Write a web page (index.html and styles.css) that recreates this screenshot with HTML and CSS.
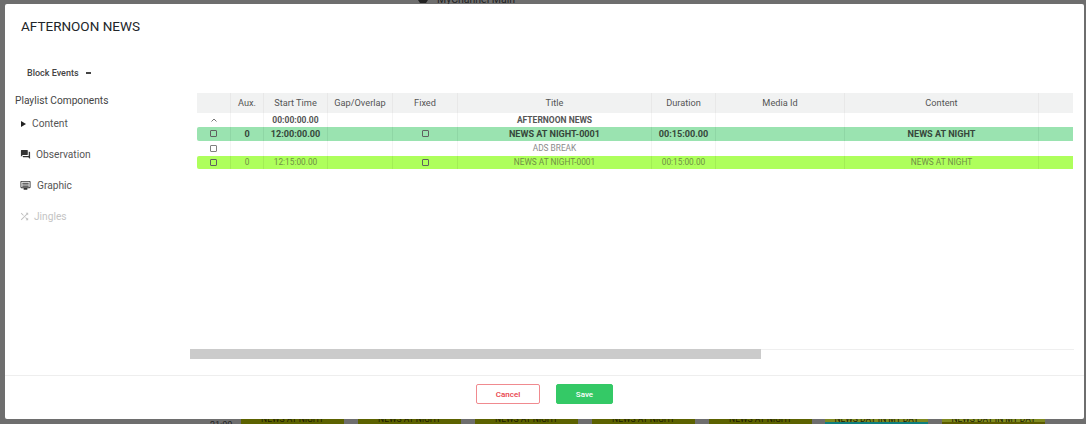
FILE: index.html
```html
<!DOCTYPE html>
<html lang="en">
<head>
<meta charset="utf-8">
<title>Afternoon News</title>
<link rel="stylesheet" href="styles.css">
</head>
<body>
<div class="backdrop">
  <div class="bg-top"><svg class="bg-logo" width="10" height="4" viewBox="0 0 10 4"><path d="M0 0h10L8 3H2z" fill="#222"/></svg><span class="bg-channel">MyChannel Main</span></div>
  <div class="bg-bottom">
    <span class="bg-time">21:00</span>
    <span class="bg-bar">NEWS AT NIGHT</span>
    <span class="bg-bar">NEWS AT NIGHT</span>
    <span class="bg-bar">NEWS AT NIGHT</span>
    <span class="bg-bar">NEWS AT NIGHT</span>
    <span class="bg-bar">NEWS AT NIGHT</span>
    <span class="bg-bar bg-teal">NEWS DAY IN MY DAY</span>
    <span class="bg-bar bg-dark">NEWS DAY IN MY DAY</span>
  </div>
</div>
<div class="modal">
  <h1 class="modal-title">AFTERNOON NEWS</h1>
  <div class="modal-body">
    <aside class="side">
      <div class="block-events">Block Events<span class="dash"></span></div>
      <div class="side-title">Playlist Components</div>
      <ul class="side-list">
        <li class="side-item item-content"><svg class="ic-play" width="5" height="6" viewBox="0 0 5 6"><path d="M0 0l5 3-5 3z"/></svg>Content</li>
        <li class="side-item item-obs"><svg class="ic" width="11" height="11" viewBox="0 0 24 24"><path d="M21 6h-2v9H6v2c0 .55.45 1 1 1h11l4 4V7c0-.55-.45-1-1-1zm-4 6V3c0-.55-.45-1-1-1H3c-.55 0-1 .45-1 1v14l4-4h10c.55 0 1-.45 1-1z"/></svg>Observation</li>
        <li class="side-item item-gfx"><svg class="ic" width="11" height="11" viewBox="0 0 24 24"><path d="M21 2H3c-1.100 0-2 .9-2 2v12c0 1.100.9 2 2 2h5v3h8v-3h5c1.100 0 2-.9 2-2V4c0-1.100-.9-2-2-2zm0 14H3V4h18zM5 6h14v2H5zm0 4h14v2H5zm0 3h14v1.500H5z"/></svg>Graphic</li>
        <li class="side-item item-jin"><svg class="ic" width="11" height="11" viewBox="0 0 24 24"><path d="M10.590 9.170 5.410 4 4 5.410l5.170 5.170zM14.500 4l2.040 2.040L4 18.590 5.410 20 17.960 7.460 20 9.500V4zm.33 9.410-1.410 1.410 3.130 3.130L14.500 20H20v-5.500l-2.040 2.040z"/></svg>Jingles</li>
      </ul>
    </aside>
    <section class="grid-wrap">
      <table class="grid">
        <colgroup>
          <col class="c-chk"><col class="c-aux"><col class="c-start"><col class="c-gap"><col class="c-fixed"><col class="c-title"><col class="c-dur"><col class="c-media"><col class="c-content"><col class="c-end">
        </colgroup>
        <thead>
          <tr><th></th><th>Aux.</th><th>Start Time</th><th>Gap/Overlap</th><th>Fixed</th><th>Title</th><th>Duration</th><th>Media Id</th><th>Content</th><th></th></tr>
        </thead>
        <tbody>
          <tr class="r-head"><td><svg class="caret" width="6" height="4" viewBox="0 0 6 4"><path d="M.5 3.500 3 1l2.500 2.500" fill="none" stroke="#777"/></svg></td><td></td><td>00:00:00.00</td><td></td><td></td><td>AFTERNOON NEWS</td><td></td><td></td><td></td><td></td></tr>
          <tr class="r-green"><td><span class="chk"></span></td><td>0</td><td>12:00:00.00</td><td></td><td><span class="chk"></span></td><td>NEWS AT NIGHT-0001</td><td>00:15:00.00</td><td></td><td>NEWS AT NIGHT</td><td></td></tr>
          <tr class="r-plain"><td><span class="chk"></span></td><td></td><td></td><td></td><td></td><td>ADS BREAK</td><td></td><td></td><td></td><td></td></tr>
          <tr class="r-lime"><td><span class="chk"></span></td><td>0</td><td>12:15:00.00</td><td></td><td><span class="chk"></span></td><td>NEWS AT NIGHT-0001</td><td>00:15:00.00</td><td></td><td>NEWS AT NIGHT</td><td></td></tr>
        </tbody>
      </table>
      <div class="hscroll"><div class="hthumb"></div></div>
    </section>
  </div>
  <footer class="modal-foot">
    <button class="btn btn-cancel">Cancel</button>
    <button class="btn btn-save">Save</button>
  </footer>
</div>
</body>
</html>
```
FILE: styles.css
```css
* { box-sizing: border-box; }
html, body { margin: 0; height: 100%; }
body {
  position: relative;
  width: 1086px;
  height: 424px;
  overflow: hidden;
  background: #6e6e6e;
  font-family: Roboto, "Liberation Sans", sans-serif;
  color: #333;
}
.backdrop { height: 424px; display: flex; flex-direction: column; justify-content: space-between; }
.bg-top { height: 4px; overflow: hidden; padding-left: 418px; display: flex; gap: 9px; font-size: 10.500px; line-height: 4px; color: #222; }
.bg-channel { transform: translateY(-2px); }
.bg-logo { flex: none; }
.bg-bottom { height: 5px; overflow: hidden; display: flex; padding-left: 210px; font-size: 8.500px; color: #222; }
.bg-time { width: 31px; font-size: 9px; line-height: 10px; flex: none; margin-top: 1px; }
.bg-bar { width: 103px; margin-right: 14px; height: 5px; background: #5c6200; text-align: center; line-height: 0; white-space: nowrap; overflow: hidden; color: #1c1c00; flex: none; }
.bg-teal { background: linear-gradient(#7f8a20 0 3px, #0f7f7f 3px); margin-left: -1px; }
.bg-dark { background: linear-gradient(#7f8a20 0 3px, #5c5c00 3px); }
.modal {
  position: absolute;
  left: 5px; top: 4px;
  width: 1079px; height: 415px;
  background: #fff;
  border-radius: 2px;
  display: flex;
  flex-direction: column;
}
.modal-title { margin: 0; padding: 14px 0 0 16px; height: 54px; font-size: 13.500px; line-height: 17px; font-weight: 400; color: #212529; }
.modal-body { height: 317px; display: flex; }
.side { width: 185px; flex: none; padding-left: 10px; }
.block-events { padding: 9px 0 0 12px; height: 30px; font-size: 9px; line-height: 12px; font-weight: 500; color: #444; display: flex; align-items: flex-start; }
.dash { width: 5px; height: 1.500px; background: #444; margin: 5px 0 0 7px; }
.side-title { font-size: 10.200px; line-height: 13px; color: #444; margin-top: 6px; }
.side-list { list-style: none; margin: 0; padding: 0; }
.side-item { display: flex; align-items: center; height: 13px; font-size: 10.200px; color: #555; fill: #333; }
.item-content { margin-top: 10px; padding-left: 6px; }
.ic-play { margin-right: 6px; fill: #222; }
.item-obs, .item-gfx, .item-jin { margin-top: 18px; }
.ic { margin-left: 5px; margin-right: 5px; flex: none; }
.item-gfx .ic { margin-right: 6px; }
.item-jin { color: #c4c4c4; fill: #c0c0c0; }
.item-jin .ic { margin-right: 4px; margin-left: 4px; }
.grid-wrap { flex: 1; position: relative; padding: 35px 0 0 7px; }
.grid { table-layout: fixed; border-collapse: separate; border-spacing: 0; width: 876px; font-size: 8.300px; color: #666; text-align: center; }
.c-chk { width: 34px; } .c-aux { width: 33px; } .c-start { width: 64px; } .c-gap { width: 65px; } .c-fixed { width: 65px; }
.c-title { width: 194px; } .c-dur { width: 64px; } .c-media { width: 129px; } .c-content { width: 194px; } .c-end { width: 34px; }
.grid th { height: 20px; padding: 0 0 2px; background: #f1f2f2; font-weight: 400; font-size: 9.200px; color: #555; border-right: 1px solid #e8e8e8; }
.grid th:last-child, .grid td:last-child { border-right: 0; }
.grid td { height: 14px; padding: 0; border-right: 1px solid #f4f4f4; line-height: 13px; white-space: nowrap; overflow: hidden; }
.caret { display: block; margin: 0 auto; }
.r-head td { font-weight: 700; color: #555; font-size: 8.500px; }
.r-green td { background: #9ae3b0; font-weight: 700; font-size: 9.100px; color: #36473b; border-right-color: #8fd6a5; }
.r-plain td { color: #8a8a8a; height: 15px; }
.r-lime td { background: #aeff5c; color: #6f8f45; border-right-color: #a2ee55; height: 13px; }
.chk { display: block; width: 7px; height: 7px; margin: 0 auto 1px; border: 1px solid #606060; border-radius: 1px; }
.r-plain .chk { border-color: #808080; }
.r-green td:first-child, .r-lime td:first-child { border-radius: 2px 0 0 2px; }
.hscroll { position: absolute; left: 0; right: 10px; top: 291px; height: 10px; border-top: 1px solid #efefef; }
.hthumb { width: 571px; height: 10px; margin-top: -1px; background: #cbcbcb; }
.modal-foot { flex: 1; border-top: 1px solid #eee; display: flex; padding: 8px 0 0 471px; align-items: flex-start; }
.btn { height: 20px; border-radius: 2px; font: 500 8px Roboto, "Liberation Sans", sans-serif; padding: 0; }
.btn-cancel { width: 64px; background: #fff; border: 1px solid #f08a8f; color: #e8404a; margin-right: 16px; }
.btn-save { width: 57px; background: #34c966; border: 1px solid #34c966; color: #fff; }
```
